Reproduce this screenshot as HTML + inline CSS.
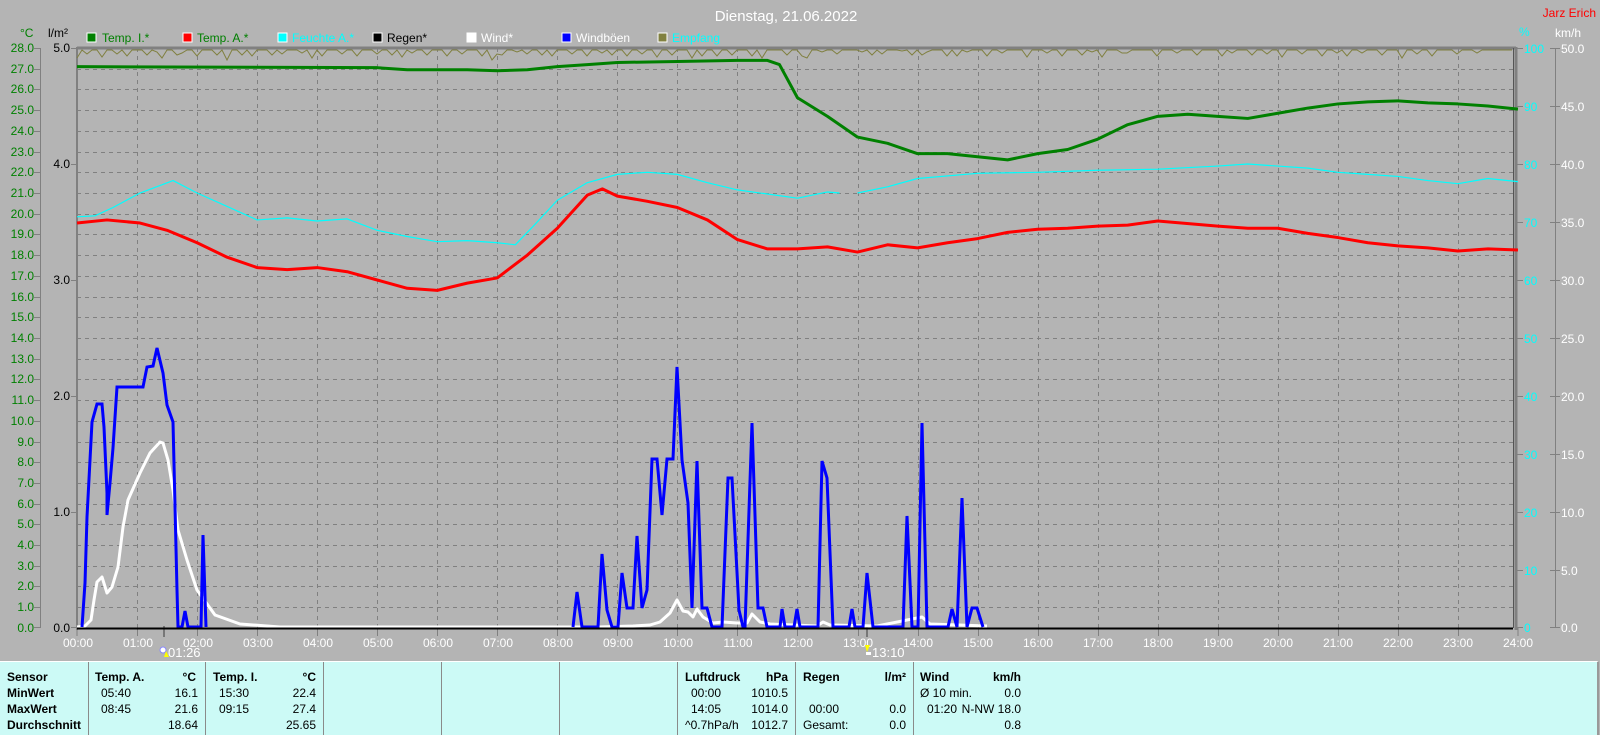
<!DOCTYPE html>
<html><head><meta charset="utf-8"><style>
body{margin:0;width:1600px;height:734px;background:#b4b4b4;overflow:hidden;font-family:"Liberation Sans",sans-serif;position:relative}
svg{position:absolute;left:0;top:0}
.tb{position:absolute;left:0;top:661px;width:1597px;height:73px;background:#ccfaf6;border-top:1px solid #fff;border-right:2px solid #999;font-size:12px;color:#000}
.tb div{position:absolute;white-space:nowrap;line-height:16px}
.b{font-weight:bold}
.r{text-align:right}
.vl{position:absolute;top:0;width:1px;height:73px;background:#8a8a8a}
</style></head><body>
<svg width="1600" height="661" font-family="Liberation Sans, sans-serif" font-size="12">
<text x="786" y="21" fill="#fff" font-size="15" text-anchor="middle">Dienstag, 21.06.2022</text>
<text x="1596" y="17" fill="#f00" font-size="12" text-anchor="end">Jarz Erich</text>
<text x="20" y="37" fill="#008000">°C</text>
<text x="48" y="37" fill="#000">l/m²</text>
<text x="1519" y="36" fill="#0ff">%</text>
<text x="1555" y="37" fill="#fff">km/h</text>
<g font-size="12">
<rect x="87" y="33" width="9" height="9" fill="#008000" stroke="#fff"/><text x="102" y="42" fill="#008000">Temp. I.*</text>
<rect x="183" y="33" width="9" height="9" fill="#f00" stroke="#fff"/><text x="197" y="42" fill="#008000">Temp. A.*</text>
<rect x="278" y="33" width="9" height="9" fill="#0ff" stroke="#fff"/><text x="292" y="42" fill="#0ff">Feuchte A.*</text>
<rect x="373" y="33" width="9" height="9" fill="#000" stroke="#fff"/><text x="387" y="42" fill="#000">Regen*</text>
<rect x="467" y="33" width="9" height="9" fill="#fff" stroke="#fff"/><text x="481" y="42" fill="#fff">Wind*</text>
<rect x="562" y="33" width="9" height="9" fill="#00f" stroke="#fff"/><text x="576" y="42" fill="#fff">Windböen</text>
<rect x="658" y="33" width="9" height="9" fill="#808040" stroke="#fff"/><text x="672" y="42" fill="#0ff">Empfang</text>
</g>
<g stroke="#808080" stroke-dasharray="4,4" stroke-width="1">
<path d="M77 607.5H1513M77 586.5H1513M77 566.5H1513M77 545.5H1513M77 524.5H1513M77 504.5H1513M77 483.5H1513M77 462.5H1513M77 442.5H1513M77 421.5H1513M77 400.5H1513M77 379.5H1513M77 359.5H1513M77 338.5H1513M77 317.5H1513M77 297.5H1513M77 276.5H1513M77 255.5H1513M77 234.5H1513M77 214.5H1513M77 193.5H1513M77 172.5H1513M77 152.5H1513M77 131.5H1513M77 110.5H1513M77 89.5H1513M77 69.5H1513"/>
<path d="M137.5 48V628M197.5 48V628M257.5 48V628M317.5 48V628M377.5 48V628M437.5 48V628M497.5 48V628M557.5 48V628M617.5 48V628M677.5 48V628M737.5 48V628M797.5 48V628M858.5 48V628M918.5 48V628M978.5 48V628M1038.5 48V628M1098.5 48V628M1158.5 48V628M1218.5 48V628M1278.5 48V628M1338.5 48V628M1398.5 48V628M1458.5 48V628"/>
</g>
<path d="M77 48H1516" stroke="#808080" stroke-width="3"/>
<path d="M77 47V630" stroke="#808080" stroke-width="2"/>
<path d="M1516 47V630" stroke="#808080" stroke-width="3"/>
<path d="M1513.5 48V628" stroke="#555" stroke-width="1"/>
<path d="M40.5 48V628" stroke="#808080"/>
<path d="M1555.5 48V628" stroke="#808080"/>
<g stroke="#808080">
<path d="M34 48.5H40M34 69.5H40M34 89.5H40M34 110.5H40M34 131.5H40M34 152.5H40M34 172.5H40M34 193.5H40M34 214.5H40M34 234.5H40M34 255.5H40M34 276.5H40M34 297.5H40M34 317.5H40M34 338.5H40M34 359.5H40M34 379.5H40M34 400.5H40M34 421.5H40M34 442.5H40M34 462.5H40M34 483.5H40M34 504.5H40M34 524.5H40M34 545.5H40M34 566.5H40M34 586.5H40M34 607.5H40M34 627.5H40"/>
<path d="M71 48.5H77M71 164.5H77M71 280.5H77M71 396.5H77M71 512.5H77M71 627.5H77"/>
<path d="M1517 48.5H1523M1517 106.5H1523M1517 164.5H1523M1517 222.5H1523M1517 280.5H1523M1517 338.5H1523M1517 396.5H1523M1517 454.5H1523M1517 512.5H1523M1517 570.5H1523M1517 627.5H1523"/>
<path d="M1550 48.5H1560M1550 106.5H1560M1550 164.5H1560M1550 222.5H1560M1550 280.5H1560M1550 338.5H1560M1550 396.5H1560M1550 454.5H1560M1550 512.5H1560M1550 570.5H1560M1550 627.5H1560"/>
<path d="M77 628V636M137.5 628V636M197.5 628V636M257.5 628V636M317.5 628V636M377.5 628V636M437.5 628V636M497.5 628V636M557.5 628V636M617.5 628V636M677.5 628V636M737.5 628V636M797.5 628V636M858.5 628V636M918.5 628V636M978.5 628V636M1038.5 628V636M1098.5 628V636M1158.5 628V636M1218.5 628V636M1278.5 628V636M1338.5 628V636M1398.5 628V636M1458.5 628V636M1518 628V636"/>
</g>
<path d="M164 626V637M867 626V637" stroke="#777" stroke-width="2"/>
<g fill="#008000" text-anchor="end">
<text x="34" y="52">28.0</text><text x="34" y="73">27.0</text><text x="34" y="93">26.0</text><text x="34" y="114">25.0</text><text x="34" y="135">24.0</text><text x="34" y="156">23.0</text><text x="34" y="176">22.0</text><text x="34" y="197">21.0</text><text x="34" y="218">20.0</text><text x="34" y="238">19.0</text><text x="34" y="259">18.0</text><text x="34" y="280">17.0</text><text x="34" y="301">16.0</text><text x="34" y="321">15.0</text><text x="34" y="342">14.0</text><text x="34" y="363">13.0</text><text x="34" y="383">12.0</text><text x="34" y="404">11.0</text><text x="34" y="425">10.0</text><text x="34" y="446">9.0</text><text x="34" y="466">8.0</text><text x="34" y="487">7.0</text><text x="34" y="508">6.0</text><text x="34" y="528">5.0</text><text x="34" y="549">4.0</text><text x="34" y="570">3.0</text><text x="34" y="590">2.0</text><text x="34" y="611">1.0</text><text x="34" y="632">0.0</text>
</g>
<g fill="#000" text-anchor="end">
<text x="70" y="52">5.0</text><text x="70" y="168">4.0</text><text x="70" y="284">3.0</text><text x="70" y="400">2.0</text><text x="70" y="516">1.0</text><text x="70" y="632">0.0</text>
</g>
<g fill="#0ff" font-size="12">
<text x="1524" y="53">100</text><text x="1524" y="111">90</text><text x="1524" y="169">80</text><text x="1524" y="227">70</text><text x="1524" y="285">60</text><text x="1524" y="343">50</text><text x="1524" y="401">40</text><text x="1524" y="459">30</text><text x="1524" y="517">20</text><text x="1524" y="575">10</text><text x="1524" y="632">0</text>
</g>
<g fill="#fff" font-size="12">
<text x="1561" y="53">50.0</text><text x="1561" y="111">45.0</text><text x="1561" y="169">40.0</text><text x="1561" y="227">35.0</text><text x="1561" y="285">30.0</text><text x="1561" y="343">25.0</text><text x="1561" y="401">20.0</text><text x="1561" y="459">15.0</text><text x="1561" y="517">10.0</text><text x="1561" y="575">5.0</text><text x="1561" y="632">0.0</text>
</g>
<g fill="#fff" text-anchor="middle" font-size="12">
<text x="78" y="647">00:00</text><text x="138" y="647">01:00</text><text x="198" y="647">02:00</text><text x="258" y="647">03:00</text><text x="318" y="647">04:00</text><text x="378" y="647">05:00</text><text x="438" y="647">06:00</text><text x="498" y="647">07:00</text><text x="558" y="647">08:00</text><text x="618" y="647">09:00</text><text x="678" y="647">10:00</text><text x="738" y="647">11:00</text><text x="798" y="647">12:00</text><text x="858" y="647">13:00</text><text x="918" y="647">14:00</text><text x="978" y="647">15:00</text><text x="1038" y="647">16:00</text><text x="1098" y="647">17:00</text><text x="1158" y="647">18:00</text><text x="1218" y="647">19:00</text><text x="1278" y="647">20:00</text><text x="1338" y="647">21:00</text><text x="1398" y="647">22:00</text><text x="1458" y="647">23:00</text><text x="1518" y="647">24:00</text>
</g>
<circle cx="163" cy="650" r="3" fill="#fff" stroke="#88f"/><path d="M164 657L166 651L169 657Z" fill="#ff0"/>
<text x="168" y="657" fill="#fff" font-size="13">01:26</text>
<path d="M865 645L870 645L867 652Z" fill="#ff0"/><rect x="866" y="652" width="5" height="3" fill="#fff"/>
<text x="872" y="657" fill="#fff" font-size="13">13:10</text>
<polyline fill="none" stroke="#808040" stroke-width="1" points="77,58 82,50 87,54 92,50 97,50 102,57 107,50 112,50 117,54 122,50 127,56 132,50 137,50 142,50 147,55 152,50 157,52 162,58 167,50 172,50 177,55 182,53 187,50 192,50 197,56 202,50 207,50 212,50 217,55 222,50 227,60 232,50 237,50 242,55 247,50 252,56 257,50 262,50 267,50 272,55 277,50 282,54 287,50 292,50 297,50 302,53 307,50 312,58 317,50 322,56 327,50 332,50 337,50 342,54 347,50 352,50 357,56 362,50 367,50 372,50 377,54 382,50 387,50 392,55 397,50 402,57 407,50 412,53 417,50 422,50 427,55 432,50 437,50 442,50 447,56 452,50 457,50 462,54 467,50 472,50 477,50 482,56 487,50 492,60 497,54 502,55 507,50 512,50 517,52 522,50 527,54 532,50 537,50 542,55 547,50 552,56 557,50 562,50 567,50 572,54 577,50 582,50 587,56 592,50 597,50 602,53 607,50 612,55 617,50 622,50 627,56 632,50 637,50 642,54 647,50 652,50 657,57 662,50 667,50 672,55 677,50 682,50 687,50 692,58 697,50 702,56 707,50 712,50 717,56 722,50 727,50 732,55 737,50 742,50 747,50 752,56 757,50 762,58 767,50 772,50 777,50 782,50 787,55 792,50 797,50 802,56 807,58 812,50 817,50 822,52 827,50 832,50 837,54 842,50 847,50 852,50 857,50 862,52 867,50 872,55 877,50 882,54 887,50 892,50 897,50 902,51 907,50 912,55 917,50 922,55 927,52 932,50 937,50 942,50 947,56 952,50 957,56 962,50 967,52 972,50 977,50 982,50 987,56 992,50 997,50 1002,53 1007,50 1012,50 1017,50 1022,50 1027,57 1032,50 1037,50 1042,50 1047,53 1052,50 1057,50 1062,56 1067,50 1072,50 1077,50 1082,55 1087,50 1092,52 1097,50 1102,57 1107,50 1112,50 1117,50 1122,53 1127,53 1132,50 1137,50 1142,50 1147,50 1152,50 1157,56 1162,50 1167,50 1172,50 1177,53 1182,50 1187,50 1192,50 1197,55 1202,50 1207,50 1212,50 1217,50 1222,56 1227,50 1232,53 1237,50 1242,50 1247,50 1252,55 1257,50 1262,50 1267,54 1272,50 1277,50 1282,57 1287,50 1292,50 1297,50 1302,54 1307,50 1312,50 1317,50 1322,56 1327,50 1332,50 1337,53 1342,50 1347,56 1352,50 1357,50 1362,53 1367,50 1372,50 1377,50 1382,55 1387,50 1392,50 1397,50 1402,58 1407,50 1412,50 1417,54 1422,50 1427,50 1432,56 1437,50 1442,50 1447,50 1452,50 1457,54 1462,50 1467,50 1472,50 1477,53 1482,50 1487,50 1492,50 1497,50 1502,50 1507,50 1512,50"/>
<g transform="translate(77,628) scale(60.04,-20.714)" fill="none" stroke-linejoin="round">
<polyline vector-effect="non-scaling-stroke" stroke="#0ff" stroke-width="1.2" points="0,19.85 0.3,19.9 0.6,20.3 1.05,21.0 1.6,21.6 2,21.0 2.5,20.35 3,19.7 3.5,19.8 4,19.65 4.5,19.75 5,19.2 5.5,18.9 6,18.65 6.5,18.7 7,18.6 7.3,18.5 7.6,19.4 8,20.65 8.5,21.5 9,21.9 9.5,22.0 10,21.9 10.5,21.5 11,21.15 12,20.75 12.5,21.05 12.7,21.0"/>
<polyline vector-effect="non-scaling-stroke" stroke="#0ff" stroke-width="1.2" points="13,21.0 13.5,21.3 14,21.7 15,21.95 16,22.0 17,22.1 18,22.15 19,22.3 19.5,22.4 20,22.3 20.5,22.2 21,22.0 21.5,21.9 22,21.8 22.5,21.6 23,21.45 23.5,21.7 24,21.55"/>
<polyline vector-effect="non-scaling-stroke" stroke="#f00" stroke-width="3" points="0,19.55 0.5,19.7 1.05,19.55 1.5,19.2 2,18.6 2.5,17.9 3,17.4 3.5,17.3 4,17.4 4.5,17.2 5,16.8 5.5,16.4 6,16.3 6.5,16.65 7,16.9 7.5,18.0 8,19.3 8.5,20.9 8.75,21.2 9,20.85 9.5,20.6 10,20.3 10.5,19.7 11,18.75 11.5,18.3 12,18.3 12.5,18.4 13,18.15 13.5,18.5 14,18.35 14.5,18.6 15,18.8 15.5,19.1 16,19.25 16.5,19.3 17,19.4 17.5,19.45 18,19.65 19,19.4 19.5,19.3 20,19.3 20.5,19.05 21,18.85 21.5,18.6 22,18.45 22.5,18.35 23,18.2 23.5,18.3 24,18.25"/>
<polyline vector-effect="non-scaling-stroke" stroke="#008000" stroke-width="3" points="0,27.1 5,27.05 5.5,26.95 6.5,26.95 7,26.9 7.5,26.95 8,27.1 8.5,27.2 9,27.3 10,27.35 11,27.4 11.5,27.4 11.7,27.2 12,25.6 12.5,24.7 13,23.7 13.5,23.4 14,22.9 14.5,22.9 15,22.75 15.5,22.6 16,22.9 16.5,23.1 17,23.6 17.5,24.3 18,24.7 18.5,24.8 19,24.7 19.5,24.6 20,24.85 20.5,25.1 21,25.3 21.5,25.4 22,25.45 22.5,25.35 23,25.3 23.5,25.2 24,25.05"/>
</g>
<polyline fill="none" stroke="#fff" stroke-width="3" stroke-linejoin="round" points="77,627 85,626 91,620 94,600 97,582 102,577 107,593 112,587 118,567 123,527 128,500 140,473 150,453 160,442 163,443 168,460 173,490 178,530 187,560 197,590 215,615 240,624 280,627 598,627 633,626 650,625 660,622 670,613 677,600 683,611 688,612 693,617 697,609 703,617 713,623 723,622 737,623 747,623 752,614 760,622 770,624 817,626 823,622 830,625 877,626 922,617 930,624 987,626"/>
<polyline fill="none" stroke="#00f" stroke-width="3" points="82,627 85,583 87,517 90,460 92,422 97,404 102,404 104,427 107,493 107,515 110,483 113,448 117,387 143,387 147,367 153,366 157,348 163,373 167,405 173,422 177,590 178,627 182,627 185,611 188,627 201,627 203,535 206,627"/>
<polyline fill="none" stroke="#00f" stroke-width="3" points="573,627 577,592 582,627 598,627 602,554 607,610 612,627 618,627 622,573 627,608 633,608 637,536 642,608 647,590 652,459 657,459 662,515 667,459 673,459 677,367 682,460 688,503 692,608 697,461 702,608 707,608 712,627 722,627 728,478 732,478 739,610 743,627 745,627 752,423 758,608 763,608 767,627 780,627 782,609 785,627 794,627 797,609 800,627 818,627 822,461 827,478 833,627 849,627 852,609 855,627 863,627 867,573 873,627 903,627 907,516 912,627 918,627 922,423 927,627 948,627 952,609 957,627 962,498 967,627 972,608 977,608 983,627"/>
<path d="M77 628.5H1513" stroke="#000" stroke-width="2"/>
</svg>
<div class="tb">
<div class="vl" style="left:88px"></div><div class="vl" style="left:205px"></div><div class="vl" style="left:323px"></div><div class="vl" style="left:441px"></div><div class="vl" style="left:559px"></div><div class="vl" style="left:677px"></div><div class="vl" style="left:795px"></div><div class="vl" style="left:913px"></div>
<div class="b" style="left:7px;top:7px">Sensor<br>MinWert<br>MaxWert<br>Durchschnitt</div>
<div class="b" style="left:95px;top:7px">Temp. A.</div><div class="b r" style="left:150px;width:46px;top:7px">°C</div>
<div style="left:101px;top:23px">05:40<br>08:45</div><div class="r" style="left:150px;width:48px;top:23px">16.1<br>21.6<br>18.64</div>
<div class="b" style="left:213px;top:7px">Temp. I.</div><div class="b r" style="left:270px;width:46px;top:7px">°C</div>
<div style="left:219px;top:23px">15:30<br>09:15</div><div class="r" style="left:268px;width:48px;top:23px">22.4<br>27.4<br>25.65</div>
<div class="b" style="left:685px;top:7px">Luftdruck</div><div class="b r" style="left:740px;width:48px;top:7px">hPa</div>
<div style="left:691px;top:23px">00:00<br>14:05</div><div style="left:685px;top:55px">^0.7hPa/h</div><div class="r" style="left:740px;width:48px;top:23px">1010.5<br>1014.0<br>1012.7</div>
<div class="b" style="left:803px;top:7px">Regen</div><div class="b r" style="left:858px;width:48px;top:7px">l/m²</div>
<div style="left:809px;top:39px">00:00</div><div style="left:803px;top:55px">Gesamt:</div><div class="r" style="left:858px;width:48px;top:39px">0.0<br>0.0</div>
<div class="b" style="left:920px;top:7px">Wind</div><div class="b r" style="left:960px;width:61px;top:7px">km/h</div>
<div style="left:920px;top:23px">Ø 10 min.</div><div style="left:927px;top:39px">01:20</div><div class="r" style="left:950px;width:71px;top:23px">0.0<br>N-NW 18.0<br>0.8</div>
</div>
</body></html>
